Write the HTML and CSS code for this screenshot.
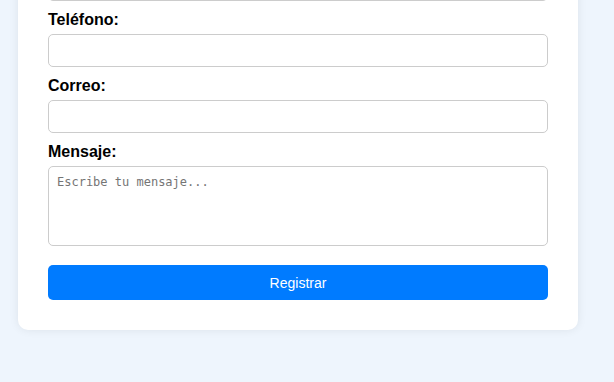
FILE: index.html
```html
<!DOCTYPE html>
<html lang="es">
  <head>
    <meta charset="UTF-8" />
    <meta name="viewport" content="width=device-width, initial-scale=1.0" />
    <title>Registro</title>
    <link rel="stylesheet" href="styles.css">
  </head>
  <body>
    <div class="container">
      <form class="form-card">
        <input type="text" id="nombre" class="input-field" aria-label="Nombre" />

        <label for="telefono">Teléfono:</label>
        <input type="tel" id="telefono" class="input-field" />

        <label for="correo">Correo:</label>
        <input type="email" id="correo" class="input-field" />

        <label for="mensaje">Mensaje:</label>
        <textarea id="mensaje" class="input-field message" placeholder="Escribe tu mensaje..."></textarea>

        <button type="button">Registrar</button>
      </form>
    </div>
  </body>
</html>
```

FILE: styles.css
```css
body {
  font-family: "Liberation Sans", Arial, sans-serif;
  margin: 0;
  background-color: #eef5fd;
  color: #000000;
  height: 382px;
  overflow: hidden;
}

.container {
  width: 560px;
  margin-left: 18px;
}

/* card is scrolled past its top, only the lower fields show */
.form-card {
  margin-top: -62px;
  padding: 30px;
  background-color: #ffffff;
  border-radius: 10px;
  box-shadow: 0 0 10px rgba(0, 0, 0, 0.08);
}

label {
  display: block;
  font-size: 16px;
  font-weight: bold;
  line-height: 18px;
  margin-top: 10px;
  margin-bottom: 5px;
}

.input-field {
  display: block;
  width: 100%;
  height: 33px;
  box-sizing: border-box;
  border: 1px solid #cccccc;
  border-radius: 5px;
  padding: 8px;
  font-size: 14px;
}

.message {
  height: 80px;
  resize: none;
  font-family: "DejaVu Sans Mono", monospace;
  font-size: 12px;
}

.message::placeholder {
  color: #757575;
}

button {
  display: block;
  width: 100%;
  height: 35px;
  margin-top: 19px;
  background-color: #007bff;
  color: #ffffff;
  border: none;
  border-radius: 5px;
  font-family: "Liberation Sans", Arial, sans-serif;
  font-size: 14px;
  cursor: pointer;
}
```
